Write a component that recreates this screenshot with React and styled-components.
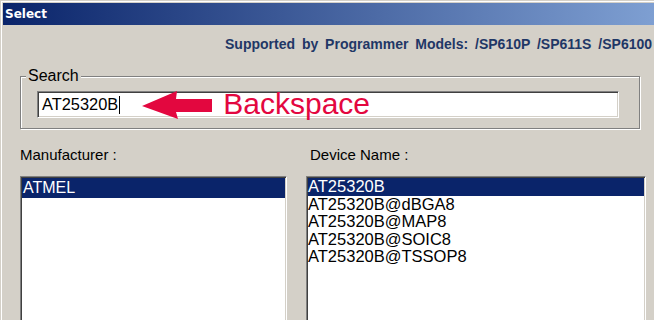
import styled, { createGlobalStyle } from 'styled-components'

const GlobalStyle = createGlobalStyle`
  html, body {
    margin: 0;
    padding: 0;
    background: #d4d0c8;
  }
  body {
    font-family: 'Liberation Sans', Arial, sans-serif;
  }
`

const Window = styled.div`
  width: 654px;
  height: 320px;
  box-sizing: border-box;
  padding: 3px 0 0 3px;
  background: #d4d0c8;
  box-shadow: inset 1px 1px 0 #d4d0c8, inset 2px 2px 0 #ffffff;
  overflow: hidden;
`

const TitleBar = styled.div`
  height: 22px;
  display: flex;
  align-items: center;
  padding-left: 2px;
  background: linear-gradient(to right, #0a246a 0%, #7e9fd2 100%);
  color: #ffffff;
  font-family: 'DejaVu Sans', Verdana, sans-serif;
  font-weight: bold;
  font-size: 12px;
  white-space: nowrap;
`

const Content = styled.div`
  display: flex;
  flex-direction: column;
  padding: 11px 0 0 0;
`

const Supported = styled.div`
  padding-left: 222px;
  font-size: 14px;
  line-height: 16px;
  font-weight: bold;
  color: #1f3766;
  word-spacing: 3px;
  white-space: nowrap;
`

const GroupBox = styled.fieldset`
  margin: 15px 0 0 17px;
  padding: 0;
  width: 620px;
  box-sizing: border-box;
  border: 1px solid #808080;
  box-shadow: inset 1px 1px 0 #ffffff, 1px 1px 0 #ffffff;
  min-width: 0;
`

const Legend = styled.legend`
  margin-left: 5px;
  padding: 0 2px;
  font-size: 16px;
  line-height: 18px;
  color: #000000;
  background: #d4d0c8;
`

const GroupBody = styled.div`
  padding: 6px 0 10px 16px;
`

const SearchField = styled.div`
  width: 582px;
  height: 27px;
  box-sizing: border-box;
  display: flex;
  align-items: center;
  padding-left: 4px;
  background: #ffffff;
  border-style: solid;
  border-width: 1px;
  border-color: #808080 #ffffff #ffffff #808080;
  box-shadow: inset 1px 1px 0 #404040, inset -1px -1px 0 #d4d0c8;
  font-size: 16.4px;
  color: #000000;
  white-space: nowrap;
`

const Caret = styled.span`
  width: 1px;
  height: 18px;
  margin-left: 1px;
  background: #000000;
`

const Arrow = styled.svg`
  flex: none;
  margin-left: 22px;
`

const Callout = styled.span`
  margin-left: 11px;
  font-size: 30px;
  line-height: 20px;
  color: #e3073f;
  position: relative;
  top: -1px;
`

const Columns = styled.div`
  display: grid;
  grid-template-columns: 267px 340px;
  column-gap: 19px;
  margin: 17px 0 0 17px;
`

const Label = styled.div`
  font-size: 15px;
  line-height: 17px;
  color: #000000;
  padding-left: ${(p) => p.$indent || 0}px;
  margin-bottom: 13px;
  white-space: nowrap;
`

const ListBox = styled.div`
  height: 160px;
  box-sizing: border-box;
  background: #ffffff;
  border-style: solid;
  border-width: 1px;
  border-color: #808080 #ffffff #ffffff #808080;
  box-shadow: inset 1px 1px 0 #404040, inset -1px -1px 0 #d4d0c8;
  padding: 1px;
  font-size: ${(p) => p.$size}px;
  color: #000000;
`

const ListItem = styled.div`
  line-height: ${(p) => p.$row}px;
  padding-left: ${(p) => p.$pad}px;
  white-space: nowrap;
  background: ${(p) => (p.$selected ? '#0a246a' : 'transparent')};
  color: ${(p) => (p.$selected ? '#ffffff' : '#000000')};
`

const manufacturers = ['ATMEL']
const devices = ['AT25320B', 'AT25320B@dBGA8', 'AT25320B@MAP8', 'AT25320B@SOIC8', 'AT25320B@TSSOP8']

export default function App() {
  return (
    <>
      <GlobalStyle />
      <Window>
        <TitleBar>Select</TitleBar>
        <Content>
          <Supported>Supported by Programmer Models: /SP610P /SP611S /SP6100</Supported>

          <GroupBox>
            <Legend>Search</Legend>
            <GroupBody>
              <SearchField>
                AT25320B
                <Caret />
                <Arrow width="70" height="28" viewBox="0 0 70 28">
                  <polygon points="0,15 35,0 34,8 70,8 70,21 34,21 36,28" fill="#e3073f" />
                </Arrow>
                <Callout>Backspace</Callout>
              </SearchField>
            </GroupBody>
          </GroupBox>

          <Columns>
            <div>
              <Label>Manufacturer :</Label>
              <ListBox $size={16}>
                {manufacturers.map((m, i) => (
                  <ListItem key={m} $row={20} $pad={1} $selected={i === 0}>
                    {m}
                  </ListItem>
                ))}
              </ListBox>
            </div>
            <div>
              <Label $indent={4}>Device Name :</Label>
              <ListBox $size={16.5}>
                {devices.map((d, i) => (
                  <ListItem key={d} $row={17.5} $pad={0} $selected={i === 0}>
                    {d}
                  </ListItem>
                ))}
              </ListBox>
            </div>
          </Columns>
        </Content>
      </Window>
    </>
  )
}
